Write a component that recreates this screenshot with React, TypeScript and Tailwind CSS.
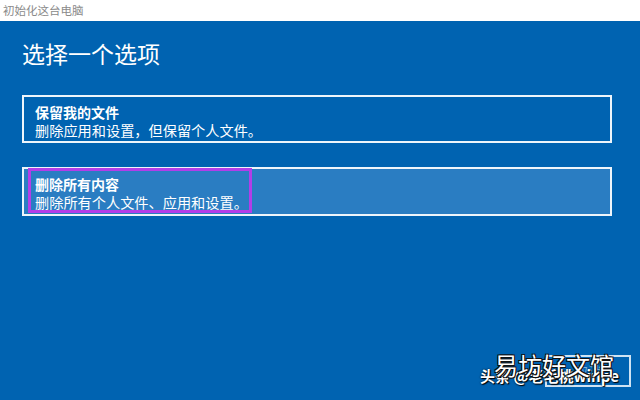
import React from "react";

export default function App() {
  const font = { fontFamily: '"Noto Sans CJK SC", "Noto Sans", sans-serif' };
  return (
    <div
      className="relative w-[640px] h-[400px] flex flex-col overflow-hidden bg-[#0063b1]"
      style={font}
    >
      <div className="h-[21px] shrink-0 bg-white flex items-center px-[3px]">
        <span className="text-[11.5px] leading-none text-[#8a8a8a]">初始化这台电脑</span>
      </div>
      <div className="flex-1 flex flex-col px-[22px] pr-[28px] pt-[17px]">
        <h1 className="text-[23px] leading-[30px] font-normal text-white">选择一个选项</h1>
        <div className="mt-[27px] h-[48px] border-2 border-[#eef5fb] pl-[11px] pt-[6px] text-white">
          <div className="text-[14px] leading-[18px] font-bold">保留我的文件</div>
          <div className="text-[14.2px] leading-[18px]">删除应用和设置，但保留个人文件。</div>
        </div>
        <div className="relative mt-[24px] h-[49px] border-2 border-[#eef5fb] bg-[#2a7dc2] pl-[11px] pt-[6px] text-white">
          <div className="text-[14px] leading-[18px] font-bold">删除所有内容</div>
          <div className="text-[14.2px] leading-[18px]">删除所有个人文件、应用和设置。</div>
          <div className="absolute left-[4px] top-[-1px] w-[224px] h-[45px] border-[3px] border-[#b23ee8]" />
        </div>
      </div>

      {/* cancel button partially visible */}
      <div className="absolute left-[545px] top-[355px] w-[86px] h-[32px] border-2 border-[#cfe3f3] flex items-center justify-center">
        <span className="text-[14px] text-white/50">取消</span>
      </div>

      {/* watermark */}
      <div className="absolute left-[480px] top-[368px] text-[15px] leading-none font-bold text-white [text-shadow:0_0_2px_#000,1px_1px_1px_#000]">
        头条 @老毛桃winpe
      </div>
      <div className="absolute left-[494px] top-[353px] text-[24px] leading-none text-white [text-shadow:1px_1px_0_#111,-1px_-1px_0_#111,1px_-1px_0_#111,-1px_1px_0_#111]">
        易坊好文馆
      </div>
    </div>
  );
}
